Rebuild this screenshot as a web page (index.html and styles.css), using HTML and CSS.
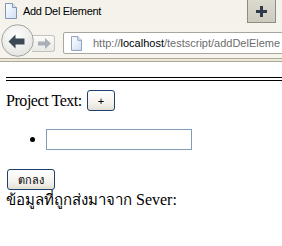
FILE: index.html
```html
<!DOCTYPE html>
<html lang="th">
<head>
    <meta charset="UTF-8">
    <meta name="viewport" content="width=device-width, initial-scale=1.0">
    <title>Add Del Element</title>
    <link rel="stylesheet" href="styles.css">
</head>
<body>
    <div class="tabbar">
        <div class="tab">
            <svg class="doc" width="12" height="16" viewBox="0 0 12 16">
                <defs>
                    <linearGradient id="paper" x1="0" y1="0" x2="1" y2="1">
                        <stop offset="0" stop-color="#ffffff"/>
                        <stop offset="1" stop-color="#cfe0f4"/>
                    </linearGradient>
                </defs>
                <path d="M0.5 0.5 H7.5 L11.5 4.5 V15.5 H0.5 Z" fill="url(#paper)" stroke="#8097b4"/>
                <path d="M7.5 0.5 V4.5 H11.5" fill="#e8f0fa" stroke="#8097b4"/>
            </svg>
            <span>Add Del Element</span>
        </div>
        <div class="newtab">
            <svg width="11" height="11" viewBox="0 0 11 11">
                <path d="M4 0 H7 V4 H11 V7 H7 V11 H4 V7 H0 V4 H4 Z" fill="#2e3a47"/>
            </svg>
        </div>
    </div>

    <div class="navbar">
        <div class="back">
            <svg width="33" height="33" viewBox="0 0 33 33">
                <defs>
                    <radialGradient id="knob" cx="0.45" cy="0.35" r="0.7">
                        <stop offset="0" stop-color="#ffffff"/>
                        <stop offset="1" stop-color="#e2e2e0"/>
                    </radialGradient>
                </defs>
                <circle cx="16.5" cy="16.5" r="15.8" fill="url(#knob)" stroke="#a3a3a0"/>
                <path d="M7.5 17.5 L14.5 10.5 V14.5 H23.5 V20.5 H14.5 V24.5 Z" fill="#3c4855"/>
            </svg>
        </div>
        <div class="forward">
            <svg width="14" height="11" viewBox="0 0 14 11">
                <path d="M0 3.5 H7 V0 L13 5.5 L7 11 V7.5 H0 Z" fill="#a9afb5"/>
            </svg>
        </div>
        <div class="urlbar">
            <svg class="doc" width="11" height="15" viewBox="0 0 12 16">
                <path d="M0.5 0.5 H7.5 L11.5 4.5 V15.5 H0.5 Z" fill="url(#paper)" stroke="#8097b4"/>
                <path d="M7.5 0.5 V4.5 H11.5" fill="#e8f0fa" stroke="#8097b4"/>
            </svg>
            <span class="url">http://<span class="host">localhost</span><span class="path">/testscript/addDelEleme</span></span>
        </div>
    </div>
    <div class="strip"></div>

    <div class="page">
        <hr class="double">
        <div class="project">
            <span class="label">Project Text:</span>
            <button class="btn">+</button>
        </div>
        <ul class="items">
            <li><input type="text" class="field"></li>
        </ul>
        <button class="btn submit">ตกลง</button>
        <div class="result"><span class="thai">ข้อมูลที่ถูกส่งมาจาก</span> Sever:</div>
    </div>
</body>
</html>
```

FILE: styles.css
```css
body {
    margin: 0;
    width: 282px;
    height: 246px;
    overflow: hidden;
    background-color: #ffffff;
}
.tabbar {
    height: 23px;
    background-color: #f4f2ea;
    display: flex;
    align-items: flex-start;
}
.tab {
    flex: 1;
    display: flex;
    align-items: center;
    gap: 6px;
    padding: 3px 0 0 5px;
    font-family: 'Liberation Sans', Arial, sans-serif;
    font-size: 11px;
    letter-spacing: -0.3px;
    color: #000;
}
.newtab {
    flex: none;
    width: 27px;
    height: 22px;
    margin-right: 6px;
    background: linear-gradient(#dcd9cf, #cdcabe);
    border: 1px solid #8f8c82;
    border-top: 0;
    display: flex;
    justify-content: center;
    align-items: center;
}
.navbar {
    height: 35px;
    background-color: #f5f3ec;
    border-bottom: 1px solid #aeaa9c;
    display: flex;
    align-items: flex-start;
}
.back {
    flex: none;
    position: relative;
    z-index: 1;
    width: 33px;
    height: 33px;
    margin: 1px 0 0 1px;
}
.back svg {
    display: block;
}
.forward {
    flex: none;
    width: 23px;
    height: 17px;
    margin: 12px 0 0 -2px;
    box-sizing: border-box;
    padding-left: 3px;
    border: 1px solid #c2c2bf;
    border-left: 0;
    border-radius: 0 3px 3px 0;
    background: linear-gradient(#fbfbfa, #e8e8e5);
    display: flex;
    align-items: center;
    justify-content: center;
}
.urlbar {
    flex: none;
    width: 240px;
    height: 22px;
    margin: 9px 0 0 8px;
    box-sizing: border-box;
    border: 1px solid #a7a69f;
    border-radius: 2px;
    background-color: #ffffff;
    display: flex;
    align-items: center;
    padding-left: 7px;
    gap: 11px;
    white-space: nowrap;
    overflow: hidden;
}
.urlbar .doc {
    flex: none;
}
.url {
    font-family: 'Liberation Sans', Tahoma, sans-serif;
    font-size: 11px;
    color: #6d6d6d;
}
.url .host {
    color: #000;
}
.strip {
    height: 2px;
    background-color: #ece9d8;
    border-bottom: 1px solid #aca899;
}
.page {
    padding-left: 6px;
    font-family: 'Liberation Serif', 'Times New Roman', serif;
    font-size: 16px;
    color: #000;
}
hr.double {
    margin: 15px -30px 0 0;
    height: 2px;
    border: 0;
    border-top: 1px solid #000;
    border-bottom: 1px solid #000;
}
.project {
    display: flex;
    align-items: center;
    gap: 5px;
    margin-top: 9px;
}
.label {
    letter-spacing: -0.45px;
}
.btn {
    height: 21px;
    padding: 0 10px;
    font-family: 'Liberation Sans', Tahoma, sans-serif;
    font-size: 11px;
    color: #000;
    border: 1px solid #1d406d;
    border-radius: 3px;
    background: linear-gradient(#ffffff, #f4f3ee 60%, #e3e0d4);
}
.items {
    margin: 18px 0 19px;
    padding-left: 40px;
}
.field {
    display: block;
    width: 146px;
    height: 21px;
    box-sizing: border-box;
    margin: 0;
    border: 1px solid #7f9db9;
    padding: 0;
}
.submit {
    display: block;
    margin-left: 1px;
}
.result {
    line-height: 18px;
    margin-top: 1px;
}
.thai {
    font-size: 15px;
}
```
